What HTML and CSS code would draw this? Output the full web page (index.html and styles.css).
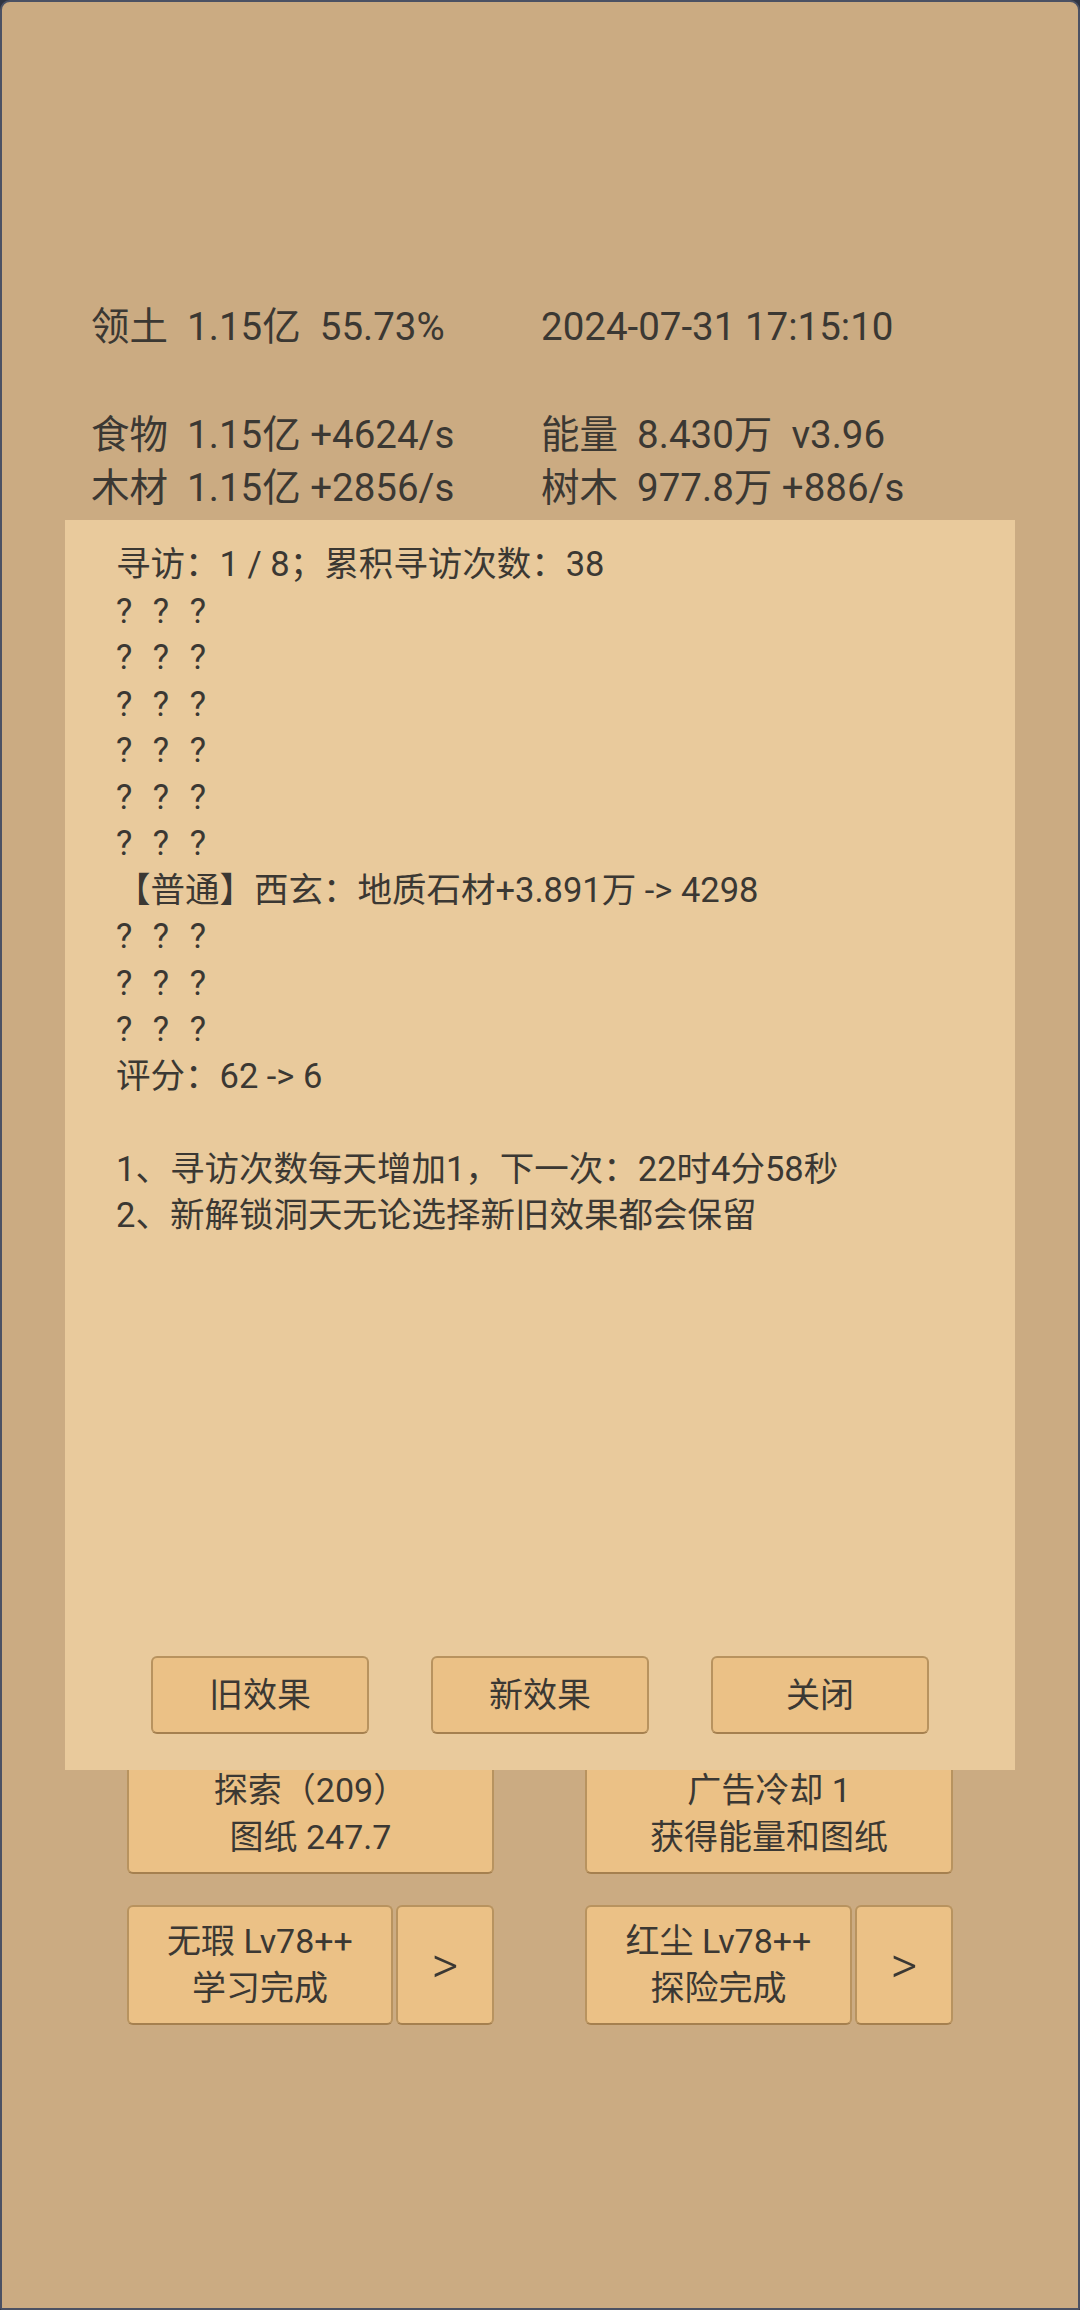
FILE: index.html
```html
<!DOCTYPE html>
<html lang="zh-CN">
<head>
  <meta charset="UTF-8">
  <meta name="viewport" content="width=device-width, initial-scale=1.0">
  <title>洞天寻访</title>
  <link rel="stylesheet" href="styles.css">
</head>
<body>
  <div class="screen">
    <div class="stats">
      <div class="stat-row first">
        <span class="cell">领土  1.15亿  55.73%</span>
        <span class="cell">2024-07-31 17:15:10</span>
      </div>
      <div class="stat-row">
        <span class="cell">食物  1.15亿 +4624/s</span>
        <span class="cell">能量  8.430万  v3.96</span>
      </div>
      <div class="stat-row">
        <span class="cell">木材  1.15亿 +2856/s</span>
        <span class="cell">树木  977.8万 +886/s</span>
      </div>
    </div>

    <div class="actions">
      <button class="btn btn-wide">探索（209）<br>图纸 247.7</button>
      <button class="btn btn-wide">广告冷却 1<br>获得能量和图纸</button>
      <div class="split">
        <button class="btn btn-main">无瑕 Lv78++<br>学习完成</button>
        <button class="btn btn-arrow">&gt;</button>
      </div>
      <div class="split">
        <button class="btn btn-main">红尘 Lv78++<br>探险完成</button>
        <button class="btn btn-arrow">&gt;</button>
      </div>
    </div>

    <div class="dialog">
      <div class="dialog-text">
        <div class="line">寻访：1 / 8；累积寻访次数：38</div>
        <div class="line unknown">? ? ?</div>
        <div class="line unknown">? ? ?</div>
        <div class="line unknown">? ? ?</div>
        <div class="line unknown">? ? ?</div>
        <div class="line unknown">? ? ?</div>
        <div class="line unknown">? ? ?</div>
        <div class="line">【普通】西玄：地质石材+3.891万 -&gt; 4298</div>
        <div class="line unknown">? ? ?</div>
        <div class="line unknown">? ? ?</div>
        <div class="line unknown">? ? ?</div>
        <div class="line">评分：62 -&gt; 6</div>
        <div class="line blank"></div>
        <div class="line">1、寻访次数每天增加1，下一次：22时4分58秒</div>
        <div class="line">2、新解锁洞天无论选择新旧效果都会保留</div>
      </div>
      <div class="dialog-buttons">
        <button class="btn btn-dialog">旧效果</button>
        <button class="btn btn-dialog">新效果</button>
        <button class="btn btn-dialog">关闭</button>
      </div>
    </div>
  </div>
</body>
</html>
```

FILE: styles.css
```css
body {
  margin: 0;
  background-color: #2f3442;
  font-family: Roboto, "Noto Sans CJK SC", sans-serif;
  color: #3b3833;
}
.screen {
  position: relative;
  width: 1080px;
  height: 2310px;
  box-sizing: border-box;
  border: 2px solid #4b5163;
  border-radius: 10px 10px 2px 2px;
  background-color: #cbab82;
  overflow: hidden;
}
.stats {
  padding: 298px 0 0 89px;
  font-size: 38.5px;
  line-height: 53px;
}
.stat-row {
  display: grid;
  grid-template-columns: 450px auto;
}
.stat-row.first {
  margin-bottom: 55px;
}
.cell {
  white-space: pre;
}
.actions {
  margin: 1240px 0 0 125px;
  display: grid;
  grid-template-columns: 367px 368px;
  column-gap: 91px;
  row-gap: 31px;
}
.btn {
  font-family: Roboto, "Noto Sans CJK SC", sans-serif;
  font-size: 34px;
  line-height: 47px;
  color: #3b3833;
  background-color: #ebc186;
  border: 2px solid #b8935f;
  border-bottom-color: #a5804f;
  border-radius: 6px;
  padding: 0;
  margin: 0;
}
.btn-wide {
  height: 120px;
}
.split {
  display: flex;
  gap: 3px;
}
.btn-main {
  flex: 1;
  height: 120px;
}
.btn-arrow {
  width: 98px;
  height: 120px;
  font-size: 52px;
  font-weight: 300;
}
.dialog {
  position: absolute;
  top: 518px;
  left: 63px;
  width: 950px;
  height: 1250px;
  box-sizing: border-box;
  padding: 21px 0 36px 51px;
  background-color: #e9ca9c;
  display: flex;
  flex-direction: column;
}
.dialog-text {
  font-size: 34.5px;
  line-height: 46.5px;
}
.line {
  white-space: pre;
}
.unknown {
  word-spacing: 12px;
}
.blank {
  height: 46.5px;
}
.dialog-buttons {
  margin-top: auto;
  margin-left: -51px;
  display: flex;
  justify-content: center;
  gap: 62px;
}
.btn-dialog {
  width: 218px;
  height: 78px;
}
```
